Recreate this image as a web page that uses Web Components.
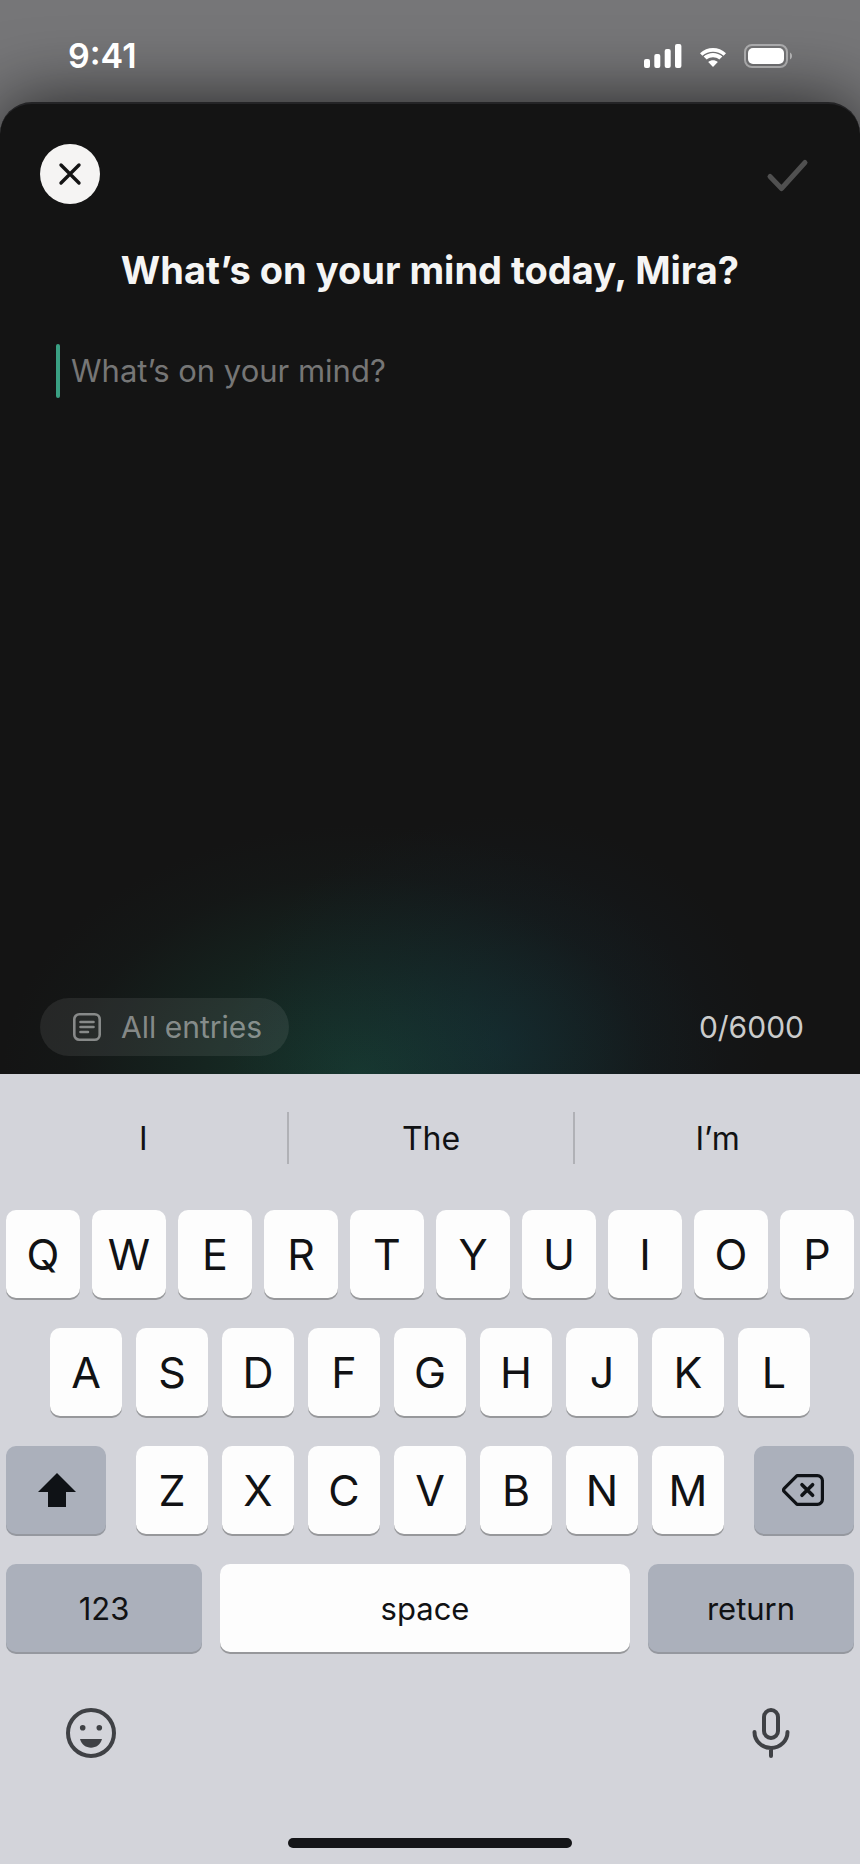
<!DOCTYPE html>
<html lang="en">
<head>
  <meta charset="utf-8">
  <meta name="viewport" content="width=device-width, initial-scale=1">
  <title>New entry</title>
  <style>
    body {
      margin: 0;
      background: #d3d4da;
      font-family: Inter, "Liberation Sans", sans-serif;
    }
  </style>
</head>
<body>
  <journal-app>
    <status-bar time="9:41"></status-bar>
    <entry-sheet heading="What’s on your mind today, Mira?" placeholder="What’s on your mind?" limit="6000"></entry-sheet>
    <touch-keyboard></touch-keyboard>
  </journal-app>

  <script>
    class JournalApp extends HTMLElement {
      constructor() {
        super();
        this.attachShadow({ mode: "open" });
      }

      connectedCallback() {
        this.shadowRoot.innerHTML = `
          <style>
            :host {
              display: flex;
              flex-direction: column;
              min-height: 100vh;
              overflow: hidden;
              background: #767678;
            }
            ::slotted(entry-sheet) {
              flex: 1;
            }
          </style>
          <slot></slot>
        `;
      }
    }

    class StatusBar extends HTMLElement {
      constructor() {
        super();
        this.attachShadow({ mode: "open" });
      }

      connectedCallback() {
        this.shadowRoot.innerHTML = `
          <style>
            :host {
              display: flex;
              align-items: center;
              justify-content: space-between;
              box-sizing: border-box;
              height: 102px;
              padding: 10px 68px 0;
              color: #fff;
              position: relative;
              z-index: 1;
            }
            .time {
              font-size: 34px;
              font-weight: 600;
              line-height: 40px;
            }
            .icons {
              display: flex;
              align-items: center;
              gap: 18px;
            }
            svg {
              display: block;
            }
          </style>
          <span class="time">${this.getAttribute("time")}</span>
          <div class="icons">
            <svg width="38" height="24" fill="#fff">
              <rect x="0" y="15" width="6" height="9" rx="2"/>
              <rect x="10.3" y="10" width="6" height="14" rx="2"/>
              <rect x="20.7" y="5" width="6" height="19" rx="2"/>
              <rect x="31" y="0" width="6.4" height="24" rx="2"/>
            </svg>
            <svg width="26" height="24" fill="#fff">
              <path d="M0 9.2C7.2 2.2 18.8 2.2 26 9.2L23.6 11.7C17.6 6.4 8.4 6.4 2.4 11.7Z"/>
              <path d="M3.6 12.5C8.9 7.7 17.1 7.7 22.4 12.5L19.3 15.6C15.7 12.5 10.3 12.5 6.7 15.6Z"/>
              <path d="M8.2 18C11 15.7 15 15.7 17.8 18L13 23Z"/>
            </svg>
            <svg width="48" height="24">
              <rect x="1" y="1" width="42" height="22" rx="7" fill="none" stroke="#fff" stroke-opacity=".4" stroke-width="2"/>
              <rect x="4" y="4" width="36" height="16" rx="5" fill="#fff"/>
              <path d="M46 8.5C47.5 9.5 48 10.5 48 12S47.5 14.5 46 15.5Z" fill="#fff" fill-opacity=".45"/>
            </svg>
          </div>
        `;
      }
    }

    class EntrySheet extends HTMLElement {
      constructor() {
        super();
        this.attachShadow({ mode: "open" });
      }

      connectedCallback() {
        const heading = this.getAttribute("heading");
        const placeholder = this.getAttribute("placeholder");
        const limit = this.getAttribute("limit");

        this.shadowRoot.innerHTML = `
          <style>
            :host {
              display: flex;
              flex-direction: column;
              box-sizing: border-box;
              padding: 40px 40px 18px;
              border-top: 2px solid #242426;
              border-radius: 32px 32px 0 0;
              background:
                radial-gradient(ellipse 270px 230px at 58% 97%, rgba(20, 60, 90, .24), rgba(20, 55, 80, .12) 50%, transparent),
                radial-gradient(ellipse 360px 250px at 42% 100%, rgba(28, 108, 80, .4), rgba(24, 90, 70, .23) 45%, rgba(24, 80, 66, .05) 80%, transparent),
                #141414;
              box-shadow: 0 0 72px rgba(0, 0, 0, .7);
            }
            header,
            footer {
              display: flex;
              align-items: center;
              justify-content: space-between;
            }
            button {
              padding: 0;
              border: 0;
              background: none;
              font: inherit;
            }
            svg {
              display: block;
            }
            .close,
            .done {
              width: 60px;
              height: 60px;
              border-radius: 50%;
            }
            .close {
              background: #f5f4f3;
            }
            h1 {
              margin: 40px 0 48px;
              color: #f5f5f4;
              font-size: 38px;
              font-weight: 700;
              line-height: 52px;
              text-align: center;
            }
            .editor {
              flex: 1;
              display: flex;
              gap: 11px;
              padding: 0 16px;
            }
            .caret {
              width: 4px;
              height: 54px;
              border-radius: 2px;
              background: #3aa083;
            }
            textarea {
              flex: 1;
              min-width: 0;
              padding: 0;
              border: 0;
              outline: 0;
              resize: none;
              background: none;
              color: #f5f5f4;
              font: inherit;
              font-size: 31px;
              line-height: 54px;
            }
            textarea::placeholder {
              color: #767676;
              opacity: 1;
            }
            .entries {
              display: flex;
              align-items: center;
              gap: 20px;
              height: 58px;
              padding: 0 27px 0 33px;
              border-radius: 29px;
              background: rgba(255, 255, 255, .08);
              color: rgba(255, 255, 255, .45);
              font-size: 30px;
            }
            .counter {
              padding-right: 16px;
              color: #cbcccc;
              font-size: 30px;
            }
          </style>
          <header>
            <button class="close" type="button" aria-label="Close">
              <svg width="60" height="60" fill="none" stroke="#141414" stroke-width="3.4" stroke-linecap="round">
                <path d="M21 21L39 39M39 21L21 39"/>
              </svg>
            </button>
            <button class="done" type="button" aria-label="Save">
              <svg width="60" height="60" fill="none" stroke="#505050" stroke-width="5" stroke-linecap="round" stroke-linejoin="round">
                <path d="M10 32.5L21.5 44.5L45 18.5"/>
              </svg>
            </button>
          </header>
          <h1>${heading}</h1>
          <div class="editor">
            <span class="caret"></span>
            <textarea aria-label="Journal entry" maxlength="${limit}" placeholder="${placeholder}"></textarea>
          </div>
          <footer>
            <button class="entries" type="button">
              <svg width="28" height="28" fill="none" stroke="currentColor" stroke-width="2.6" stroke-linecap="round">
                <rect x="1.3" y="1.3" width="25.4" height="25.4" rx="5"/>
                <path d="M7.5 9H20.5M7.5 14H20.5M7.5 19H15"/>
              </svg>
              All entries
            </button>
            <span class="counter">0/${limit}</span>
          </footer>
        `;

        const textarea = this.shadowRoot.querySelector("textarea");
        const counter = this.shadowRoot.querySelector(".counter");
        const caret = this.shadowRoot.querySelector(".caret");
        textarea.addEventListener("input", () => {
          counter.textContent = `${textarea.value.length}/${limit}`;
          caret.style.visibility = textarea.value ? "hidden" : "visible";
        });
      }
    }

    class KeyboardKey extends HTMLElement {
      constructor() {
        super();
        this.attachShadow({ mode: "open" });
      }

      connectedCallback() {
        const label = this.getAttribute("label");
        this.shadowRoot.innerHTML = `
          <style>
            :host {
              display: block;
              flex: 1;
              min-width: 0;
            }
            button {
              display: flex;
              align-items: center;
              justify-content: center;
              width: 100%;
              height: 88px;
              padding: 0;
              border: 0;
              border-radius: 10px;
              background: #fdfdfd;
              box-shadow: 0 2px 0 #97989b;
              color: #111214;
              font: inherit;
              font-size: 43px;
            }
            :host([wide]) button {
              font-size: 31px;
            }
            :host([dark]) button {
              background: #abb0bb;
              box-shadow: 0 2px 0 #95989f;
            }
          </style>
          <button type="button" ${label ? `aria-label="${label}"` : ""}><slot></slot></button>
        `;
      }
    }

    class TouchKeyboard extends HTMLElement {
      constructor() {
        super();
        this.attachShadow({ mode: "open" });
      }

      getKeys(letters) {
        return [...letters].map((letter) => `<keyboard-key>${letter}</keyboard-key>`).join("");
      }

      connectedCallback() {
        this.shadowRoot.innerHTML = `
          <style>
            :host {
              display: block;
              position: relative;
              padding: 38px 6px 16px;
              background: #d3d4da;
              color: #111214;
            }
            svg {
              display: block;
            }
            button {
              padding: 0;
              border: 0;
              background: none;
              color: inherit;
              font: inherit;
            }
            .suggestions {
              display: grid;
              grid-template-columns: repeat(3, 1fr);
              margin: 0 -6px 46px;
            }
            .suggestions button {
              height: 52px;
              font-size: 32px;
            }
            .suggestions button + button {
              border-left: 2px solid #b0b1b6;
            }
            .rows {
              display: grid;
              gap: 30px;
            }
            .row {
              display: flex;
              gap: 12px;
            }
            .row--home {
              gap: 14px;
              padding: 0 44px;
            }
            .row--shift {
              display: grid;
              grid-template-columns: 100px 1fr 100px;
              gap: 30px;
            }
            .letters {
              display: flex;
              gap: 14px;
            }
            .row--space {
              display: grid;
              grid-template-columns: 196fr 410fr 206fr;
              gap: 18px;
            }
            .tools {
              display: flex;
              justify-content: space-between;
              margin: 56px 58px 80px 60px;
              color: #3f4145;
            }
            .tools button {
              display: flex;
              justify-content: center;
              width: 50px;
              height: 50px;
            }
            .home {
              width: 284px;
              height: 10px;
              margin: 0 auto;
              border-radius: 5px;
              background: #141518;
            }
          </style>
          <div class="suggestions">
            <button type="button">I</button>
            <button type="button">The</button>
            <button type="button">I’m</button>
          </div>
          <div class="rows">
            <div class="row">${this.getKeys("QWERTYUIOP")}</div>
            <div class="row row--home">${this.getKeys("ASDFGHJKL")}</div>
            <div class="row row--shift">
              <keyboard-key dark label="Shift">
                <svg width="40" height="34"><path d="M21 0L40 19H30V34H12V19H2Z" fill="#0f1216"/></svg>
              </keyboard-key>
              <div class="letters">${this.getKeys("ZXCVBNM")}</div>
              <keyboard-key dark label="Delete">
                <svg width="44" height="32" fill="none" stroke="#0f1216" stroke-width="3.2" stroke-linecap="round" stroke-linejoin="round">
                  <path d="M15 1.6H35.4A5 5 0 0 1 40.4 6.6V25.4A5 5 0 0 1 35.4 30.4H15L2.3 17.6A2.3 2.3 0 0 1 2.3 14.4Z"/>
                  <path d="M20 10.7L30.600 21.3M30.600 10.7L20 21.3" stroke-width="3.6"/>
                </svg>
              </keyboard-key>
            </div>
            <div class="row row--space">
              <keyboard-key dark wide>123</keyboard-key>
              <keyboard-key wide>space</keyboard-key>
              <keyboard-key dark wide>return</keyboard-key>
            </div>
          </div>
          <div class="tools">
            <button type="button" aria-label="Emoji">
              <svg width="50" height="50" fill="currentColor">
                <circle cx="25" cy="25" r="23" fill="none" stroke="currentColor" stroke-width="4"/>
                <circle cx="16.7" cy="19.7" r="2.8"/>
                <circle cx="33.3" cy="19.7" r="2.8"/>
                <path d="M14 31H36C34.5 36.5 30 39.7 25 39.7S15.5 36.5 14 31Z"/>
              </svg>
            </button>
            <button type="button" aria-label="Dictate">
              <svg width="38" height="50" fill="none" stroke="currentColor" stroke-width="4" stroke-linecap="round">
                <rect x="12" y="2" width="14" height="28" rx="7"/>
                <path d="M2.5 24C2.5 32.5 9.5 40 19 40S35.5 32.5 35.5 24M19 40V48"/>
              </svg>
            </button>
          </div>
          <div class="home"></div>
        `;
      }
    }

    customElements.define("keyboard-key", KeyboardKey);
    customElements.define("touch-keyboard", TouchKeyboard);
    customElements.define("entry-sheet", EntrySheet);
    customElements.define("status-bar", StatusBar);
    customElements.define("journal-app", JournalApp);
  </script>
</body>
</html>
